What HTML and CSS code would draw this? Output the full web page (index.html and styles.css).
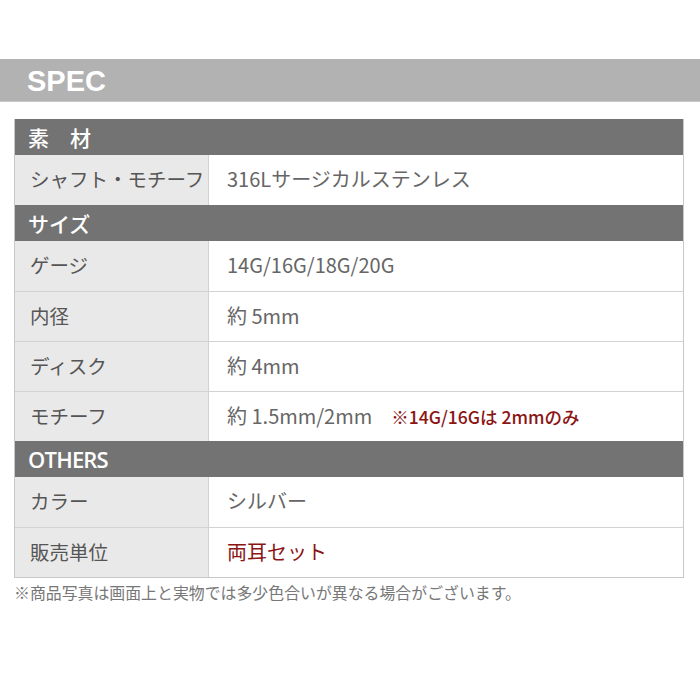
FILE: index.html
```html
<!DOCTYPE html>
<html lang="ja">
<head>
<meta charset="utf-8">
<link rel="stylesheet" href="styles.css">
</head>
<body>
<div class="page">
  <div class="spec-bar">SPEC</div>
  <div class="table">
    <div class="head">素　材</div>
    <div class="row"><div class="label">シャフト・モチーフ</div><div class="value">316Lサージカルステンレス</div></div>
    <div class="head">サイズ</div>
    <div class="row"><div class="label">ゲージ</div><div class="value">14G/16G/18G/20G</div></div>
    <div class="row"><div class="label">内径</div><div class="value">約 5mm</div></div>
    <div class="row"><div class="label">ディスク</div><div class="value">約 4mm</div></div>
    <div class="row"><div class="label">モチーフ</div><div class="value">約 1.5mm/2mm<span class="note">※14G/16Gは 2mmのみ</span></div></div>
    <div class="head head-latin">OTHERS</div>
    <div class="row"><div class="label">カラー</div><div class="value">シルバー</div></div>
    <div class="row"><div class="label">販売単位</div><div class="value red">両耳セット</div></div>
  </div>
  <p class="foot">※商品写真は画面上と実物では多少色合いが異なる場合がございます。</p>
</div>
</body>
</html>
```
FILE: styles.css
```css
html, body { margin: 0; padding: 0; background: #fff; }
body { font-family: "Noto Sans CJK JP", "Noto Sans", sans-serif; width: 700px; height: 700px; overflow: hidden; }
.page { padding-top: 59px; }
.spec-bar {
  height: 42px;
  background: #b3b2b2;
  border-bottom: 1px solid #c9c9c9;
  color: #fff;
  font-family: "Liberation Sans", Arial, sans-serif;
  font-weight: bold;
  font-size: 29px;
  line-height: 44px;
  padding-left: 27px;
}
.table {
  margin: 17px 16px 0 14px;
  border-left: 1px solid #c8c8c8;
  border-right: 1px solid #c8c8c8;
  border-bottom: 1px solid #c8c8c8;
}
.head {
  height: 36px;
  background: #737373;
  color: #fff;
  font-size: 21px;
  line-height: 36px;
  padding-left: 13px;
  font-weight: 500;
}
.head-latin { font-family: "Open Sans", "Noto Sans", sans-serif; font-size: 22px; font-weight: 600; letter-spacing: -0.8px; padding-left: 13px; }
.row { display: flex; height: 50px; box-sizing: border-box; }
.row + .row { border-top: 1px solid #d2d2d2; }
.label {
  width: 178px;
  background: #eae9e9;
  border-right: 1px solid #d2d2d2;
  color: #555;
  font-size: 19.5px;
  line-height: 48px;
  padding-left: 15px;
}
.value {
  flex: 1;
  color: #666;
  font-size: 20px;
  line-height: 48px;
  padding-left: 18px;
}
.note { color: #8b1414; font-size: 17.5px; margin-left: 19px; font-weight: 500; }
.red { color: #8b1414; }
.foot {
  margin: 4px 0 0 14px;
  color: #777;
  font-size: 15.9px;
  line-height: 22px;
  white-space: nowrap;
}
```
